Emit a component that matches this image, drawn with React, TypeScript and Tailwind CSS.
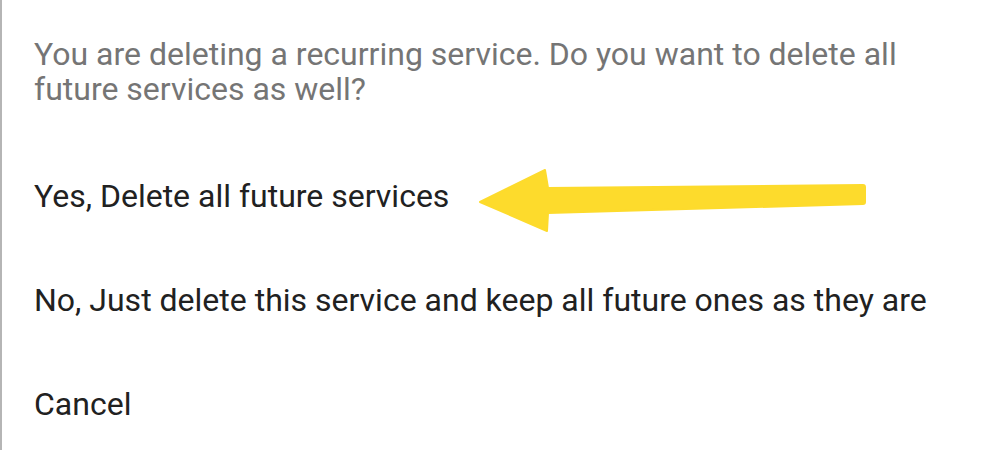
export default function App() {
  const options = [
    "Yes, Delete all future services",
    "No, Just delete this service and keep all future ones as they are",
    "Cancel",
  ];

  return (
    <div className="relative h-[450px] w-[992px] overflow-hidden border-l-2 border-[#b5b5b5] bg-white font-['Roboto',sans-serif]">
      <div className="pl-[32px] pr-4 pt-[37px]">
        <p className="text-[32px] leading-[35px] text-[#757575]">
          You are deleting a recurring service. Do you want to delete all
          <br />
          future services as well?
        </p>
        <div className="mt-[37px] flex flex-col">
          {options.map((label) => (
            <div
              key={label}
              className="h-[104px] whitespace-nowrap text-[32px] leading-[104px] text-[#212121]"
            >
              {label}
            </div>
          ))}
        </div>
      </div>
      <svg
        className="absolute left-0 top-0"
        width="992"
        height="450"
        viewBox="0 0 992 450"
      >
        <path
          d="M478 202 L543 170 L546 188 L861 185 Q863 185 863 187 L863 202 Q863 204 861 204 L546 213 L545 231 Z"
          fill="#FDDB2C"
          stroke="#FDDB2C"
          strokeWidth="2"
          strokeLinejoin="round"
        />
      </svg>
    </div>
  );
}
